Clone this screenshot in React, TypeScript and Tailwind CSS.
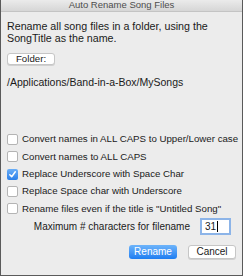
import { useState } from 'react'

const options = [
  { label: 'Convert names in ALL CAPS to Upper/Lower case', checked: false },
  { label: 'Convert names to ALL CAPS', checked: false },
  { label: 'Replace Underscore with Space Char', checked: true },
  { label: 'Replace Space char with Underscore', checked: false },
  { label: 'Rename files even if the title is "Untitled Song"', checked: false },
]

function Checkbox({ checked, label }: { checked: boolean; label: string }) {
  return (
    <label className="flex h-[17.3px] items-center gap-[4px] whitespace-nowrap">
      {checked ? (
        <span className="flex h-[11px] w-[11px] shrink-0 items-center justify-center rounded-[2px] bg-gradient-to-b from-[#6aaef7] to-[#2a7fe8]">
          <svg width="9" height="9" viewBox="0 0 9 9">
            <path d="M1.8 4.8 L3.7 6.8 L7.3 1.8" fill="none" stroke="white" strokeWidth="1.5" strokeLinecap="round" strokeLinejoin="round" />
          </svg>
        </span>
      ) : (
        <span className="h-[11px] w-[11px] shrink-0 rounded-[2px] border border-[#b4b4b4] bg-white" />
      )}
      <span>{label}</span>
    </label>
  )
}

export default function App() {
  const [max] = useState('31')

  return (
    <div className="flex h-[276px] w-[243px] flex-col border-x border-b border-[#5a5a5a] bg-[#ececec] font-['Liberation_Sans',sans-serif] text-[9.7px] text-[#1a1a1a]">
      <div className="flex h-[12px] items-center justify-center border-b border-[#c4c4c4] bg-gradient-to-b from-[#ebebeb] to-[#d6d6d6] text-[9.5px] text-[#4d4d4d]">
        Auto Rename Song Files
      </div>

      <div className="flex flex-1 flex-col px-[6px]">
        <p className="mt-[8px] text-[10.7px] leading-[12px]">
          Rename all song files in a folder, using the
          <br />
          SongTitle as the name.
        </p>

        <button className="mt-[9px] h-[12px] w-[48px] rounded-[3px] border border-[#c6c6c6] bg-white text-[9.7px] leading-none shadow-[0_1px_0_#d0d0d0]">
          Folder:
        </button>

        <p className="mt-[11px] text-[10.5px] leading-[12px]">/Applications/Band-in-a-Box/MySongs</p>

        <div className="mt-[43px] flex flex-col">
          {options.map((o) => (
            <Checkbox key={o.label} {...o} />
          ))}
        </div>

        <div className="mt-[1px] flex items-center justify-end gap-[10px] pr-[5px]">
          <span className="text-[10px]">Maximum # characters for filename</span>
          <div className="flex h-[17px] w-[31px] items-center border-2 border-[#8cb4e8] bg-white px-[3px]">
            <span className="text-[10px]">{max}</span>
            <span className="ml-[1px] h-[11px] w-px bg-black" />
          </div>
        </div>

        <div className="mt-[10px] flex justify-end gap-[11px]">
          <button className="h-[14px] w-[48px] rounded-[3px] bg-gradient-to-b from-[#6db4fa] to-[#1b7df1] text-[10px] leading-none text-white">
            Rename
          </button>
          <button className="h-[14px] w-[48px] rounded-[3px] border border-[#c6c6c6] bg-white text-[10px] leading-none shadow-[0_1px_0_#d0d0d0]">
            Cancel
          </button>
        </div>
      </div>
    </div>
  )
}
